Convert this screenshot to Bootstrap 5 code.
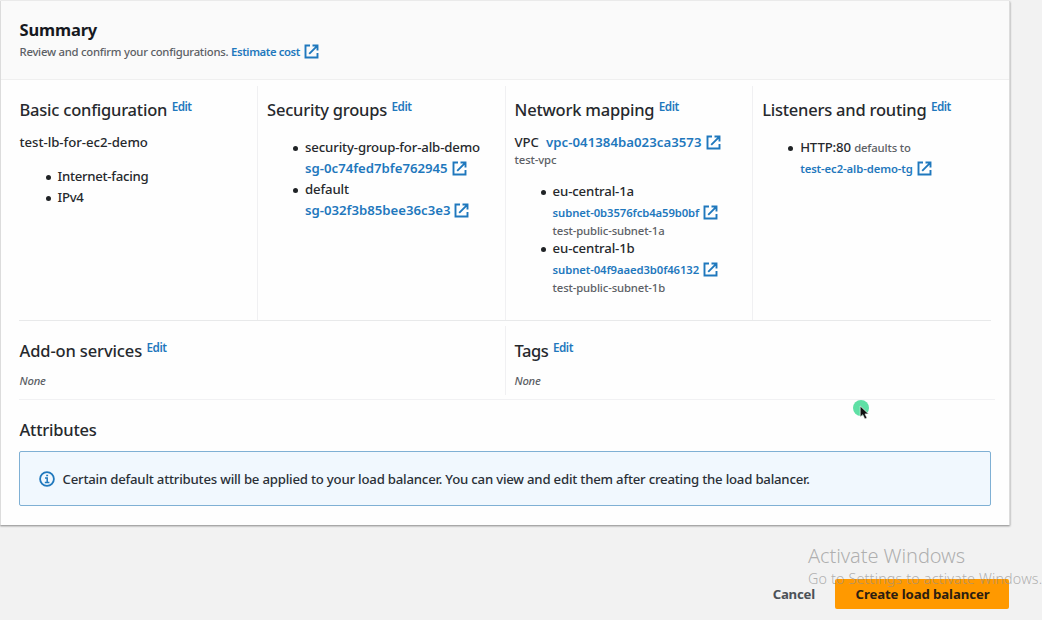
<!DOCTYPE html>
<html lang="en">
<head>
<meta charset="utf-8">
<meta name="viewport" content="width=device-width, initial-scale=1">
<title>Create load balancer</title>
<link href="https://cdn.jsdelivr.net/npm/bootstrap@5.3.0/dist/css/bootstrap.min.css" rel="stylesheet">
<style>
  body { background: #f2f2f2; font-family: "Noto Sans", "Open Sans", sans-serif; font-size: 13.2px; font-weight: 500; letter-spacing: -.14px; color: #26292d; line-height: 21px; height: 620px; overflow: hidden; position: relative; }
  a { color: #1f78bd; text-decoration: none; font-weight: 600; letter-spacing: -.01px; }

  .summary-card { width: 1010px; height: 524px; margin-top: 1px; border: 0; border-left: 1px solid #dcdcdc; border-right: 1px solid #dcdcdc; border-radius: 0; background: #fefefe; box-shadow: 0 1px 2px rgba(0,0,0,.45); color: inherit; }
  .summary-head { height: 79px; padding: 18px 18.5px 0; background: #fafafa; border-bottom: 1px solid #efefef; }
  .summary-head h1 { font-size: 16.5px; font-weight: 700; line-height: 22px; margin: 0; letter-spacing: -.15px; color: #16191f; }
  .fine { font-size: 11.3px; letter-spacing: -.13px; color: #5c6065; }
  .fine-link { font-size: 11.3px; letter-spacing: -.1px; }
  .intro { letter-spacing: -.25px; }
  .estimate { letter-spacing: -.4px; }
  .estimate .ext { margin-left: 1px; }
  .section-title { font-size: 16.5px; font-weight: 500; line-height: 22px; margin: 0; letter-spacing: -.22px; display: flex; white-space: nowrap; }
  .section-title a { font-size: 11.7px; font-weight: 600; letter-spacing: -.5px; line-height: 15px; margin-left: 4.5px; }

  .summary-row { margin: 0 9px 0 8.5px; --bs-gutter-x: 20px; --bs-gutter-y: 0; }
  .config-row { height: 240px; padding-top: 6px; }
  .config-row > .col { padding-top: 13px; white-space: nowrap; }
  .ruled { border-left: 1px solid #f0f0f2; padding-left: 8.7px; }
  .rule { height: 1px; margin: 0 18px; background: #e8e9ea; }
  .rule-soft { background: #f1f1f3; margin-right: 14px; }
  .line { display: block; }
  .lb-name { margin-top: 11px; letter-spacing: -.03px; }
  .items { margin: 0; padding-left: 38px; list-style: none; }
  .items li { position: relative; }
  .items li::before { content: ""; position: absolute; left: -12px; top: 8.5px; width: 5px; height: 5px; border-radius: 50%; background: #202326; }
  .schemes { margin-top: 13px; letter-spacing: -.27px; }
  .vpc { margin-top: 11px; }
  .vpc a { letter-spacing: .04px; }
  .vpc-name { line-height: 15px; margin-top: -1px; }
  .zones { margin-top: 14px; }
  .zones .fine { line-height: 15.5px; margin-top: -.4px; }
  .ext { width: 15px; height: 15px; margin-left: 4px; fill: none; stroke: currentColor; stroke-width: 1.9; vertical-align: -3px; }

  .services-row { height: 78px; padding: 5px 0 4px; }
  .services-cell { padding: 14px 10px 0; }
  .services-cell.ruled { padding-left: 8.7px; }
  .none { display: block; margin-top: 7.5px; letter-spacing: -.2px; }
  .tags-title { letter-spacing: -.4px; }
  .addon-title { letter-spacing: -.13px; }
  .attributes { margin: 19px 0 0 18.5px; }
  .notice { height: 55px; margin: 10px 18px 0; padding: 1px 19px 0; background: #f1f8fe; border: 1px solid #7fb0d4; border-radius: 2px; letter-spacing: -.21px; color: #2a3037; }
  .notice span { margin-left: 7.5px; }

  .actions { margin: 54px 33px 0 0; }
  .cancel { color: #4c5157; font-weight: 700; letter-spacing: -.2px; margin-right: 20px; }
  .btn-launch { width: 174px; height: 30px; padding: 0 0 0 1px; border: 0; border-radius: 2px; background: #ff9900; color: #2c1d10; font-size: 13.2px; font-weight: 700; letter-spacing: -.1px; line-height: 31px; }
  .btn-launch:hover { background: #ec7211; }

  .watermark { left: 808px; top: 542px; color: rgba(145,145,145,.7); font-weight: 300; white-space: nowrap; pointer-events: none; }
  .watermark div:first-child { font-size: 20px; line-height: 27px; letter-spacing: -.08px; }
  .watermark div:last-child { font-size: 14.3px; line-height: 19px; letter-spacing: .17px; }
  .pointer { left: 850px; top: 396px; }
</style>
</head>
<body>
<svg class="d-none">
  <symbol id="external" viewBox="0 0 15 15"><path d="M6 1.5H1.5v12h12V9M8.5 1.5h5v5M13.2 1.8 5.2 9.8"/></symbol>
</svg>

<main class="summary-card card">
  <header class="summary-head">
    <h1>Summary</h1>
    <div class="fine"><span class="intro">Review and confirm your configurations.</span> <a href="#" class="estimate">Estimate cost <svg class="ext"><use href="#external"/></svg></a></div>
  </header>

  <div class="row summary-row config-row">
    <section class="col">
      <h2 class="section-title">Basic configuration <a href="#">Edit</a></h2>
      <div class="lb-name">test-lb-for-ec2-demo</div>
      <ul class="items schemes"><li>Internet-facing</li><li>IPv4</li></ul>
    </section>
    <section class="col ruled">
      <h2 class="section-title">Security groups <a href="#">Edit</a></h2>
      <ul class="items mt-3">
        <li>security-group-for-alb-demo<a href="#" class="line">sg-0c74fed7bfe762945<svg class="ext"><use href="#external"/></svg></a></li>
        <li>default<a href="#" class="line">sg-032f3b85bee36c3e3<svg class="ext"><use href="#external"/></svg></a></li>
      </ul>
    </section>
    <section class="col ruled">
      <h2 class="section-title">Network mapping <a href="#">Edit</a></h2>
      <div class="vpc">VPC <a href="#" class="ms-1">vpc-041384ba023ca3573<svg class="ext"><use href="#external"/></svg></a></div>
      <div class="fine vpc-name">test-vpc</div>
      <ul class="items zones">
        <li>eu-central-1a<a href="#" class="line fine-link">subnet-0b3576fcb4a59b0bf<svg class="ext"><use href="#external"/></svg></a><span class="line fine">test-public-subnet-1a</span></li>
        <li>eu-central-1b<a href="#" class="line fine-link">subnet-04f9aaed3b0f46132<svg class="ext"><use href="#external"/></svg></a><span class="line fine">test-public-subnet-1b</span></li>
      </ul>
    </section>
    <section class="col ruled">
      <h2 class="section-title">Listeners and routing <a href="#">Edit</a></h2>
      <ul class="items mt-3">
        <li>HTTP:80 <span class="fine">defaults to</span><a href="#" class="line fine-link">test-ec2-alb-demo-tg<svg class="ext"><use href="#external"/></svg></a></li>
      </ul>
    </section>
  </div>

  <div class="rule"></div>
  <div class="row summary-row services-row">
    <section class="col px-0">
      <div class="h-100 services-cell"><h2 class="section-title addon-title">Add-on services <a href="#">Edit</a></h2><em class="fine none">None</em></div>
    </section>
    <section class="col px-0">
      <div class="h-100 services-cell ruled"><h2 class="section-title tags-title">Tags <a href="#">Edit</a></h2><em class="fine none">None</em></div>
    </section>
  </div>
  <div class="rule rule-soft"></div>

  <h2 class="section-title attributes">Attributes</h2>
  <div class="notice d-flex align-items-center">
    <svg width="16" height="16" viewBox="0 0 16 16" fill="none" stroke="#1f78bd" stroke-width="1.8"><circle cx="8" cy="8" r="6.9"/><path d="M6 6.9h2.2v4.3M5.8 11.4h4.6M7.2 4.6h1.9" stroke-width="1.5"/></svg>
    <span>Certain default attributes will be applied to your load balancer. You can view and edit them after creating the load balancer.</span>
  </div>
</main>

<div class="actions d-flex justify-content-end align-items-center">
  <a href="#" class="cancel">Cancel</a>
  <button class="btn btn-launch" type="button">Create load balancer</button>
</div>

<div class="watermark position-absolute"><div>Activate Windows</div><div>Go to Settings to activate Windows.</div></div>
<svg class="pointer position-absolute" width="22" height="26" viewBox="0 0 22 26"><circle cx="11" cy="12" r="8" fill="#5fe0a5"/><path d="M10.2 10v11l2.6-2.3 2 4.3 2.2-1-2-4.1h3.5z" fill="#111" stroke="#fff" stroke-width=".6"/></svg>

<script src="https://cdn.jsdelivr.net/npm/bootstrap@5.3.0/dist/js/bootstrap.bundle.min.js"></script>
</body>
</html>
